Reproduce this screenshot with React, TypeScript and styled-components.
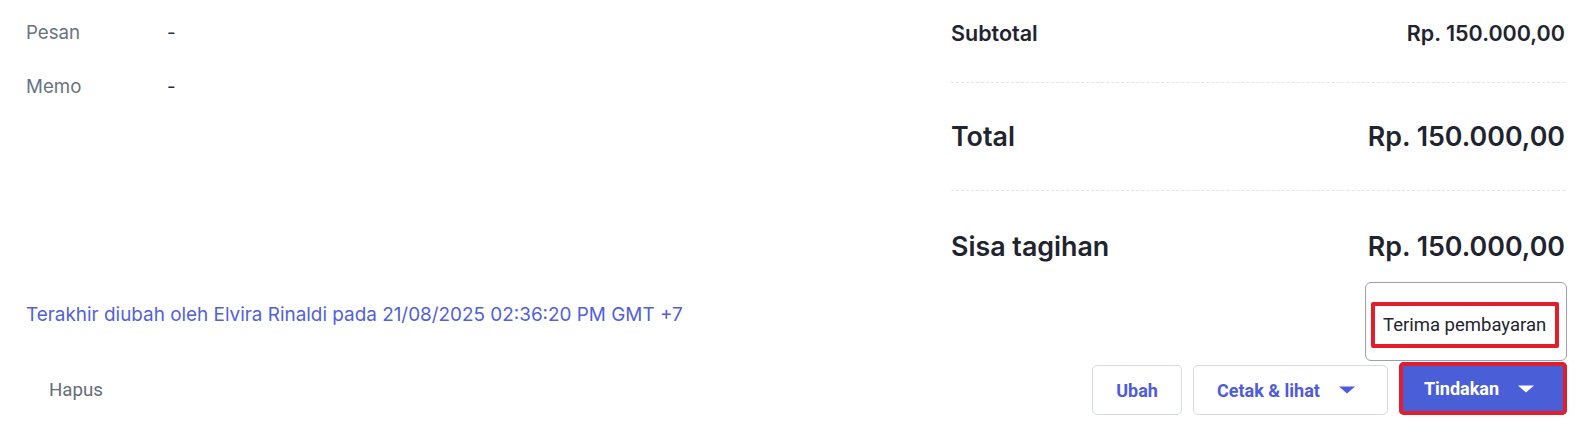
import React from 'react';
import styled, { createGlobalStyle } from 'styled-components';

const GlobalStyle = createGlobalStyle`
  html, body {
    margin: 0;
    padding: 0;
    background: #ffffff;
  }
  body {
    font-family: Inter, "Noto Sans", sans-serif;
    color: #1f2430;
  }
  * { box-sizing: border-box; }
`;

const Page = styled.div`
  padding: 0 26px;
  width: 1591px;
`;

const TopGrid = styled.div`
  display: grid;
  grid-template-columns: 1fr 614px;
  padding-top: 18px;
`;

const InfoList = styled.div`
  display: flex;
  flex-direction: column;
  gap: 25px;
`;

const InfoRow = styled.div`
  display: grid;
  grid-template-columns: 141px 1fr;
  font-size: 18.7px;
  line-height: 29px;
`;

const InfoLabel = styled.span`
  color: #687385;
`;

const InfoValue = styled.span`
  color: #262b36;
`;

const Totals = styled.div`
  display: flex;
  flex-direction: column;
`;

const TotalRow = styled.div<{ $big?: boolean; $first?: boolean; $last?: boolean }>`
  display: flex;
  justify-content: space-between;
  align-items: center;
  font-weight: 600;
  color: #1f2430;
  font-size: ${(p) => (p.$big ? '26.8px' : '21.5px')};
  line-height: ${(p) => (p.$big ? '40px' : '30px')};
  padding: ${(p) => (p.$first ? '0 0 34px' : p.$last ? '35px 0 0' : '33px 0 34px')};
  border-bottom: ${(p) => (p.$last ? 'none' : '1px dashed #e3e5ea')};
`;

const Audit = styled.div`
  margin-top: 36px;
  font-size: 18.9px;
  line-height: 26px;
  color: #5160dd;
`;

const Footer = styled.div`
  margin-top: 34px;
  display: flex;
  align-items: flex-end;
  justify-content: space-between;
`;

const Actions = styled.div`
  display: flex;
  align-items: flex-end;
  gap: 11px;
  margin-right: -2px;
`;

const Button = styled.button<{ $variant?: 'ghost' | 'outline' | 'primary' }>`
  display: inline-flex;
  align-items: center;
  height: ${(p) => (p.$variant === 'primary' ? '53px' : '50px')};
  padding: 0 23px;
  border-radius: 5px;
  font-family: Roboto, "Liberation Sans", sans-serif;
  font-size: ${(p) => (p.$variant === 'ghost' ? '18.7px' : '18px')};
  font-weight: ${(p) => (p.$variant === 'ghost' ? 400 : 700)};
  cursor: pointer;
  background: ${(p) => (p.$variant === 'primary' ? '#4a5ed8' : '#ffffff')};
  color: ${(p) =>
    p.$variant === 'primary' ? '#ffffff' : p.$variant === 'ghost' ? '#646b78' : '#4e5bdc'};
  border: ${(p) => (p.$variant === 'outline' ? '1px solid #d5d9e1' : 'none')};
  box-shadow: ${(p) => (p.$variant === 'primary' ? 'inset 0 0 0 4px #e41d2a' : 'none')};
`;

const DropButton = styled(Button)`
  gap: 15px;
  padding-left: ${(p) => (p.$variant === 'primary' ? '25px' : '23px')};
  padding-right: ${(p) => (p.$variant === 'primary' ? '29px' : '28px')};
`;

const Caret = styled.svg`
  width: 24px;
  height: 8px;
  flex: none;
`;

const MenuAnchor = styled.div`
  position: relative;
`;

const Menu = styled.div`
  position: absolute;
  right: 0;
  bottom: calc(100% + 1px);
  width: 202px;
  padding: 19px 7px 12px 5px;
  background: #ffffff;
  border: 1px solid #9aa1ad;
  border-radius: 6px;
`;

const MenuItem = styled.div<{ $active?: boolean }>`
  height: 46px;
  display: flex;
  align-items: center;
  padding-left: 8px;
  font-family: Roboto, "Liberation Sans", sans-serif;
  font-size: 18.5px;
  color: #1f2430;
  white-space: nowrap;
  border: ${(p) => (p.$active ? '4px solid #e41d2a' : '4px solid transparent')};
  border-radius: 2px;
`;

const CaretIcon = ({ color }: { color: string }) => (
  <Caret viewBox="0 0 24 8">
    <path d="M4 0.5 L20 0.5 L12 7.5 Z" fill={color} />
  </Caret>
);

export default function App() {
  return (
    <Page>
      <GlobalStyle />
      <TopGrid>
        <InfoList>
          <InfoRow>
            <InfoLabel>Pesan</InfoLabel>
            <InfoValue>-</InfoValue>
          </InfoRow>
          <InfoRow>
            <InfoLabel>Memo</InfoLabel>
            <InfoValue>-</InfoValue>
          </InfoRow>
        </InfoList>
        <Totals>
          <TotalRow $first>
            <span>Subtotal</span>
            <span>Rp. 150.000,00</span>
          </TotalRow>
          <TotalRow $big>
            <span>Total</span>
            <span>Rp. 150.000,00</span>
          </TotalRow>
          <TotalRow $big $last>
            <span>Sisa tagihan</span>
            <span>Rp. 150.000,00</span>
          </TotalRow>
        </Totals>
      </TopGrid>
      <Audit>Terakhir diubah oleh Elvira Rinaldi pada 21/08/2025 02:36:20 PM GMT +7</Audit>
      <Footer>
        <Button $variant="ghost">Hapus</Button>
        <Actions>
          <Button $variant="outline">Ubah</Button>
          <DropButton $variant="outline">
            Cetak &amp; lihat
            <CaretIcon color="#4e5bdc" />
          </DropButton>
          <MenuAnchor>
            <Menu>
              <MenuItem $active>Terima pembayaran</MenuItem>
            </Menu>
            <DropButton $variant="primary">
              Tindakan
              <CaretIcon color="#ffffff" />
            </DropButton>
          </MenuAnchor>
        </Actions>
      </Footer>
    </Page>
  );
}
